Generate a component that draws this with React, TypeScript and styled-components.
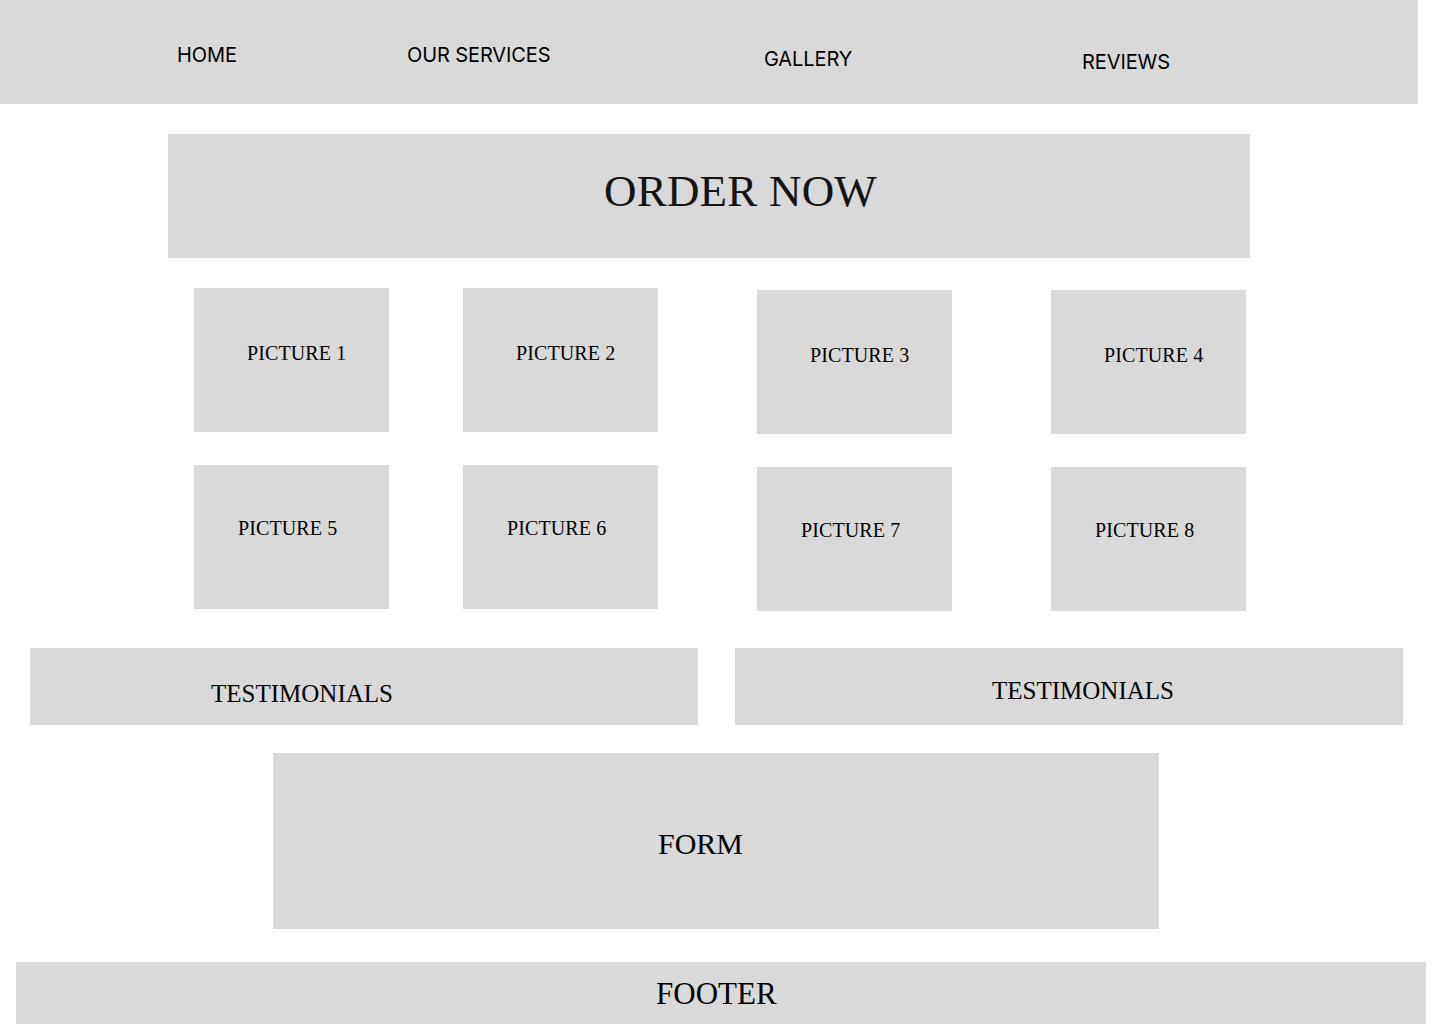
import React from "react";
import styled, { createGlobalStyle } from "styled-components";

const GlobalStyle = createGlobalStyle`
  html, body { margin: 0; padding: 0; background: #ffffff; }
  body { font-family: "Liberation Serif", "Times New Roman", serif; color: #000; }
  * { box-sizing: border-box; }
`;

const Page = styled.div`
  width: 1440px;
  height: 1024px;
  overflow: hidden;
  display: flex;
  flex-direction: column;
`;

const NavBar = styled.nav`
  width: 1418px;
  height: 104px;
  background: #d9d9d9;
  display: grid;
  grid-template-columns: 230px 357px 318px auto;
  padding-left: 177px;
  align-items: start;
`;

const NavLink = styled.a<{ $top: number }>`
  font-family: Inter, "Liberation Sans", sans-serif;
  font-size: 20px;
  line-height: 24px;
  color: #000;
  text-decoration: none;
  margin-top: ${(p) => p.$top}px;
  letter-spacing: -0.1px;
`;

const OrderBanner = styled.section`
  margin: 30px 0 0 168px;
  width: 1082px;
  height: 124px;
  background: #d9d9d9;
  display: flex;
  align-items: center;
  padding: 0 0 10px 436px;
`;

const OrderTitle = styled.h1`
  margin: 0;
  font-weight: 400;
  font-size: 45px;
  line-height: 52px;
  color: #141414;
  letter-spacing: 0.2px;
`;

const Gallery = styled.section`
  margin-top: 30px;
  padding-left: 194px;
  display: grid;
  grid-template-columns: 269px 294px 294px 195px;
  row-gap: 31px;
  align-items: start;
`;

const PictureCard = styled.div<{ $shift: number; $padTop: number; $padLeft: number }>`
  width: 195px;
  height: 144px;
  background: #d9d9d9;
  margin-top: ${(p) => p.$shift}px;
  padding: ${(p) => p.$padTop}px 0 0 ${(p) => p.$padLeft}px;
`;

const PictureLabel = styled.span`
  display: block;
  font-size: 20px;
  line-height: 24px;
  white-space: nowrap;
  letter-spacing: 0.1px;
`;

const TestimonialRow = styled.section`
  margin: 37px 0 0 30px;
  display: flex;
  gap: 37px;
`;

const TestimonialCard = styled.div<{ $padLeft: number; $padBottom: number }>`
  width: 668px;
  height: 77px;
  background: #d9d9d9;
  display: flex;
  align-items: center;
  padding-left: ${(p) => p.$padLeft}px;
  padding-top: ${(p) => 15 - p.$padBottom}px;
`;

const TestimonialLabel = styled.h2`
  margin: 0;
  font-weight: 400;
  font-size: 25px;
  line-height: 30px;
`;

const FormBlock = styled.section`
  margin: 28px 0 0 273px;
  width: 886px;
  height: 176px;
  background: #d9d9d9;
  display: flex;
  align-items: center;
  padding: 6px 0 0 385px;
`;

const Footer = styled.footer`
  margin: 33px 0 0 16px;
  width: 1410px;
  height: 62px;
  background: #d9d9d9;
  display: flex;
  align-items: center;
  padding: 2px 0 0 640px;
`;

const BlockLabel = styled.h2<{ $size: number }>`
  margin: 0;
  font-weight: 400;
  font-size: ${(p) => p.$size}px;
  line-height: 36px;
`;

const navItems = [
  { label: "HOME", top: 43 },
  { label: "OUR SERVICES", top: 43 },
  { label: "GALLERY", top: 47 },
  { label: "REVIEWS", top: 50 },
];

const pictures = [1, 2, 3, 4, 5, 6, 7, 8].map((n) => {
  const col = (n - 1) % 4;
  const row = Math.floor((n - 1) / 4);
  return {
    n,
    shift: col >= 2 ? 2 : 0,
    padTop: row === 0 ? 53 : 51,
    padLeft: row === 0 ? 53 : 44,
  };
});

export default function App() {
  return (
    <>
      <GlobalStyle />
      <Page>
        <NavBar>
          {navItems.map((item) => (
            <NavLink key={item.label} href="#" $top={item.top}>
              {item.label}
            </NavLink>
          ))}
        </NavBar>

        <OrderBanner>
          <OrderTitle>ORDER NOW</OrderTitle>
        </OrderBanner>

        <Gallery>
          {pictures.map((p) => (
            <PictureCard key={p.n} $shift={p.shift} $padTop={p.padTop} $padLeft={p.padLeft}>
              <PictureLabel>PICTURE {p.n}</PictureLabel>
            </PictureCard>
          ))}
        </Gallery>

        <TestimonialRow>
          <TestimonialCard $padLeft={181} $padBottom={0}>
            <TestimonialLabel>TESTIMONIALS</TestimonialLabel>
          </TestimonialCard>
          <TestimonialCard $padLeft={257} $padBottom={6}>
            <TestimonialLabel>TESTIMONIALS</TestimonialLabel>
          </TestimonialCard>
        </TestimonialRow>

        <FormBlock>
          <BlockLabel $size={30}>FORM</BlockLabel>
        </FormBlock>

        <Footer>
          <BlockLabel $size={31}>FOOTER</BlockLabel>
        </Footer>
      </Page>
    </>
  );
}
